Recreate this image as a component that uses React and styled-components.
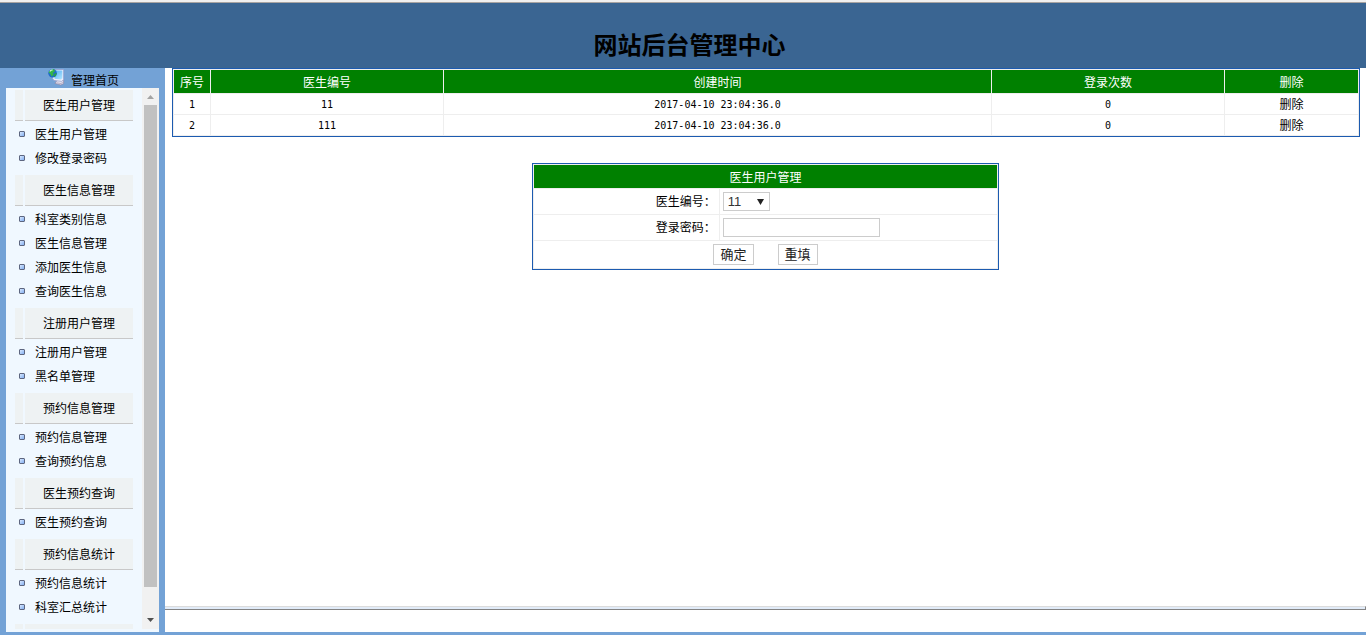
import React from 'react'
import styled, { createGlobalStyle } from 'styled-components'

const GlobalStyle = createGlobalStyle`
  *, *::before {
    box-sizing: border-box;
  }
  body {
    margin: 0;
    background: #fff;
    color: #000;
    font-family: "Liberation Sans", "Noto Sans CJK SC", sans-serif;
    font-size: 12px;
  }
  a {
    color: inherit;
    text-decoration: none;
  }
`

const Page = styled.div`
  display: flex;
  flex-direction: column;
  height: 100vh;
  overflow: hidden;
`

const Header = styled.header`
  display: flex;
  justify-content: center;
  align-items: flex-end;
  height: 68px;
  flex: none;
  padding: 0 0 3px 13px;
  border-top: 2px solid #f0f0f0;
  background: #3a6592;
  box-shadow: inset 0 1px 0 #a8a4a2;
`

const Title = styled.h1`
  margin: 0;
  font-size: 24px;
  line-height: 38px;
  font-weight: bold;
`

const Body = styled.div`
  display: flex;
  flex: 1;
  min-height: 0;
  border-bottom: 3px solid #73a2d6;
`

const Sidebar = styled.aside`
  display: flex;
  flex-direction: column;
  width: 165px;
  flex: none;
  padding: 0 6px;
  background: #73a2d6;
`

const HomeLink = styled.a`
  display: flex;
  gap: 6px;
  height: 20px;
  flex: none;
  padding-left: 42px;
  line-height: 26px;
`

const MenuPanel = styled.div`
  display: flex;
  flex: 1;
  min-height: 0;
  padding-bottom: 3px;
  background: #f0f8ff;
`

const MenuList = styled.nav`
  flex: 1;
  overflow: hidden;
  padding: 2px 9px 0;
`

const Group = styled.section`
  padding-bottom: 6px;
`

const GroupTitle = styled.h2`
  display: flex;
  gap: 2px;
  height: 31px;
  margin: 0;
  font-size: 12px;
  line-height: 32px;
  font-weight: normal;

  &::before {
    content: '';
    width: 8px;
    background: #eef2f3;
    border-bottom: 1px solid #c8c8c8;
  }

  span {
    flex: 1;
    background: #eef2f3;
    border-bottom: 1px solid #c8c8c8;
    text-align: center;
  }
`

const Item = styled.a`
  display: flex;
  align-items: center;
  gap: 10px;
  height: 24px;
  padding-left: 4px;
  white-space: nowrap;

  &::before {
    content: '';
    width: 6px;
    height: 6px;
    margin-top: 2px;
    border: 1px solid #5d6680;
    border-radius: 1px;
    background: linear-gradient(135deg, #d9e9ff, #82aef0);
  }
`

const ScrollBar = styled.div`
  display: flex;
  flex-direction: column;
  align-items: center;
  width: 17px;
  background: #f1f1f1;
`

const ScrollArrow = styled.svg`
  width: 17px;
  height: 17px;
  flex: none;
  fill: ${(props) => props.$color};
`

const ScrollTrack = styled.div`
  flex: 1;
  width: 13px;
`

const ScrollThumb = styled.div`
  height: 95%;
  background: #c1c1c1;
`

const Frames = styled.div`
  display: flex;
  flex-direction: column;
  flex: 1;
  min-width: 0;
`

const Main = styled.main`
  flex: 1;
  padding: 0 6px 0 7px;
  font-family: "DejaVu Sans Mono", "Noto Sans CJK SC", monospace;
`

const FrameSplit = styled.div`
  height: 4px;
  border-top: 1px solid #dcdcdc;
  border-right: 1px solid #848484;
  border-bottom: 1px solid #848484;
  background: #e1ebf8;
`

const BottomFrame = styled.footer`
  height: 22px;
`

const Table = styled.table`
  width: 100%;
  table-layout: fixed;
  border: 1px solid #1c5bb0;
  border-spacing: 1px;
  background: #eee;
  color: #000;
  text-align: center;
`

const Th = styled.th`
  height: 23px;
  padding: 3px 0 0;
  background: #008000;
  color: #fff;
  font-weight: normal;
  line-height: 20px;
`

const Td = styled.td`
  height: 20px;
  padding: 2px 0 0;
  background: #fff;
  font-size: ${(props) => (props.$number ? '10px' : '12px')};
  line-height: 18px;
`

const PasswordForm = styled.form`
  padding: 26px 1px 0 0;
`

const FormTable = styled(Table)`
  width: 467px;
  max-width: 100%;
  margin: 0 auto;
`

const FormLabel = styled.td`
  height: 25px;
  padding: 2px 3px 0 0;
  background: #fff;
  text-align: right;
  line-height: 23px;
`

const FormField = styled.td`
  padding: 0 3px;
  background: #fff;
  text-align: left;
`

const FormActions = styled.td`
  height: 27px;
  padding: 0;
  background: #fff;
`

const ButtonRow = styled.div`
  display: flex;
  justify-content: center;
  gap: 24px;
`

const SelectBox = styled.div`
  display: grid;
  width: 47px;
  align-items: center;

  > * {
    grid-area: 1 / 1;
  }

  svg {
    justify-self: end;
    margin-right: 6px;
    pointer-events: none;
  }
`

const Select = styled.select`
  appearance: none;
  width: 47px;
  height: 19px;
  padding: 0 4px;
  border: 1px solid #ccc;
  border-radius: 0;
  background: #fff;
  color: #333;
  font-family: "Liberation Sans", sans-serif;
  font-size: 13px;
  line-height: 17px;
`

const Input = styled.input`
  display: block;
  width: 157px;
  height: 19px;
  padding: 0 2px;
  border: 1px solid #ccc;
  background: #fff;
  outline: none;
`

const Button = styled.button`
  height: 21px;
  padding: 0 6px;
  border: 1px solid #ccc;
  background: #fff;
  color: #222;
  font-family: "Liberation Sans", "Noto Sans CJK SC", sans-serif;
  font-size: 13px;
  line-height: 19px;
`

const menu = [
  { title: '医生用户管理', items: ['医生用户管理', '修改登录密码'] },
  { title: '医生信息管理', items: ['科室类别信息', '医生信息管理', '添加医生信息', '查询医生信息'] },
  { title: '注册用户管理', items: ['注册用户管理', '黑名单管理'] },
  { title: '预约信息管理', items: ['预约信息管理', '查询预约信息'] },
  { title: '医生预约查询', items: ['医生预约查询'] },
  { title: '预约信息统计', items: ['预约信息统计', '科室汇总统计'] },
  { title: '', items: [] },
]

const doctors = [
  { id: '11', created: '2017-04-10 23:04:36.0', logins: 0 },
  { id: '111', created: '2017-04-10 23:04:36.0', logins: 0 },
]

function ComputerIcon() {
  return (
    <svg width="17" height="18" viewBox="0 0 17 18" aria-hidden="true">
      <defs>
        <linearGradient id="screen" x1="0" y1="0" x2="1" y2="1">
          <stop offset="0" stopColor="#4cacf4" />
          <stop offset="1" stopColor="#b4e6ff" />
        </linearGradient>
      </defs>
      <path d="M11 11H15.6V15.6L12.8 17 7 15.4 8.4 13.2Z" fill="#e4e0ec" stroke="#8a86a8" strokeWidth=".7" />
      <path d="M4.6 1.5H15.6V11.6L13.6 13.4 6 12.4 4.6 10.6Z" fill="#eceefa" stroke="#8e9bcc" strokeWidth=".7" />
      <path d="M5.6 2.5H14.4V10.2L12.8 11.4 6.6 10.8Z" fill="url(#screen)" />
      <circle cx="4.6" cy="5.2" r="4.3" fill="#1f6bcb" />
      <path d="M.6 4.2Q2.4.8 6.2 1.3L7 3.2 5 5 5.6 6.8 3.6 8.4 2.2 6Z" fill="#35b54a" />
      <path d="M6.6 5.4 8.8 5 8 7.8 6.2 9 5.6 7.4Z" fill="#2aa04b" />
      <path d="M1.8 3.4Q2.8 1.9 4.6 1.9" fill="none" stroke="#d6f8d0" strokeWidth="1.1" />
      <path d="M8.6 14.8 13 15.6 14.8 14.2" fill="none" stroke="#aaa4c2" strokeWidth=".8" />
    </svg>
  )
}

function App() {
  return (
    <Page>
      <GlobalStyle />
      <Header>
        <Title>网站后台管理中心</Title>
      </Header>

      <Body>
        <Sidebar>
          <HomeLink href="#home">
            <ComputerIcon />
            管理首页
          </HomeLink>
          <MenuPanel>
            <MenuList>
              {menu.map((group, i) => (
                <Group key={i}>
                  <GroupTitle><span>{group.title}</span></GroupTitle>
                  {group.items.map((item) => (
                    <Item key={item} href="#menu">{item}</Item>
                  ))}
                </Group>
              ))}
            </MenuList>
            <ScrollBar aria-hidden="true">
              <ScrollArrow $color="#a3a3a3" viewBox="0 0 17 17">
                <path d="M5 11 8.5 7 12 11Z" />
              </ScrollArrow>
              <ScrollTrack>
                <ScrollThumb />
              </ScrollTrack>
              <ScrollArrow $color="#505050" viewBox="0 0 17 17">
                <path d="M5 6 8.5 10 12 6Z" />
              </ScrollArrow>
            </ScrollBar>
          </MenuPanel>
        </Sidebar>

        <Frames>
          <Main>
            <Table>
              <colgroup>
                <col width="36" />
                <col width="232" />
                <col />
                <col width="232" />
                <col width="133" />
              </colgroup>
              <thead>
                <tr>
                  <Th>序号</Th>
                  <Th>医生编号</Th>
                  <Th>创建时间</Th>
                  <Th>登录次数</Th>
                  <Th>删除</Th>
                </tr>
              </thead>
              <tbody>
                {doctors.map((doctor, i) => (
                  <tr key={doctor.id}>
                    <Td $number>{i + 1}</Td>
                    <Td $number>{doctor.id}</Td>
                    <Td $number>{doctor.created}</Td>
                    <Td $number>{doctor.logins}</Td>
                    <Td><a href="#delete">删除</a></Td>
                  </tr>
                ))}
              </tbody>
            </Table>

            <PasswordForm onSubmit={(e) => e.preventDefault()}>
              <FormTable>
                <colgroup>
                  <col width="40%" />
                  <col />
                </colgroup>
                <thead>
                  <tr>
                    <Th colSpan="2">医生用户管理</Th>
                  </tr>
                </thead>
                <tbody>
                  <tr>
                    <FormLabel><label htmlFor="doctor">医生编号：</label></FormLabel>
                    <FormField>
                      <SelectBox>
                        <Select id="doctor">
                          <option>11</option>
                        </Select>
                        <svg width="7" height="6" viewBox="0 0 7 6">
                          <path d="M0 0H7L3.5 6Z" fill="#222" />
                        </svg>
                      </SelectBox>
                    </FormField>
                  </tr>
                  <tr>
                    <FormLabel><label htmlFor="password">登录密码：</label></FormLabel>
                    <FormField><Input id="password" type="password" /></FormField>
                  </tr>
                  <tr>
                    <FormActions colSpan="2">
                      <ButtonRow>
                        <Button type="submit">确定</Button>
                        <Button type="reset">重填</Button>
                      </ButtonRow>
                    </FormActions>
                  </tr>
                </tbody>
              </FormTable>
            </PasswordForm>
          </Main>
          <FrameSplit />
          <BottomFrame />
        </Frames>
      </Body>
    </Page>
  )
}

export default App
